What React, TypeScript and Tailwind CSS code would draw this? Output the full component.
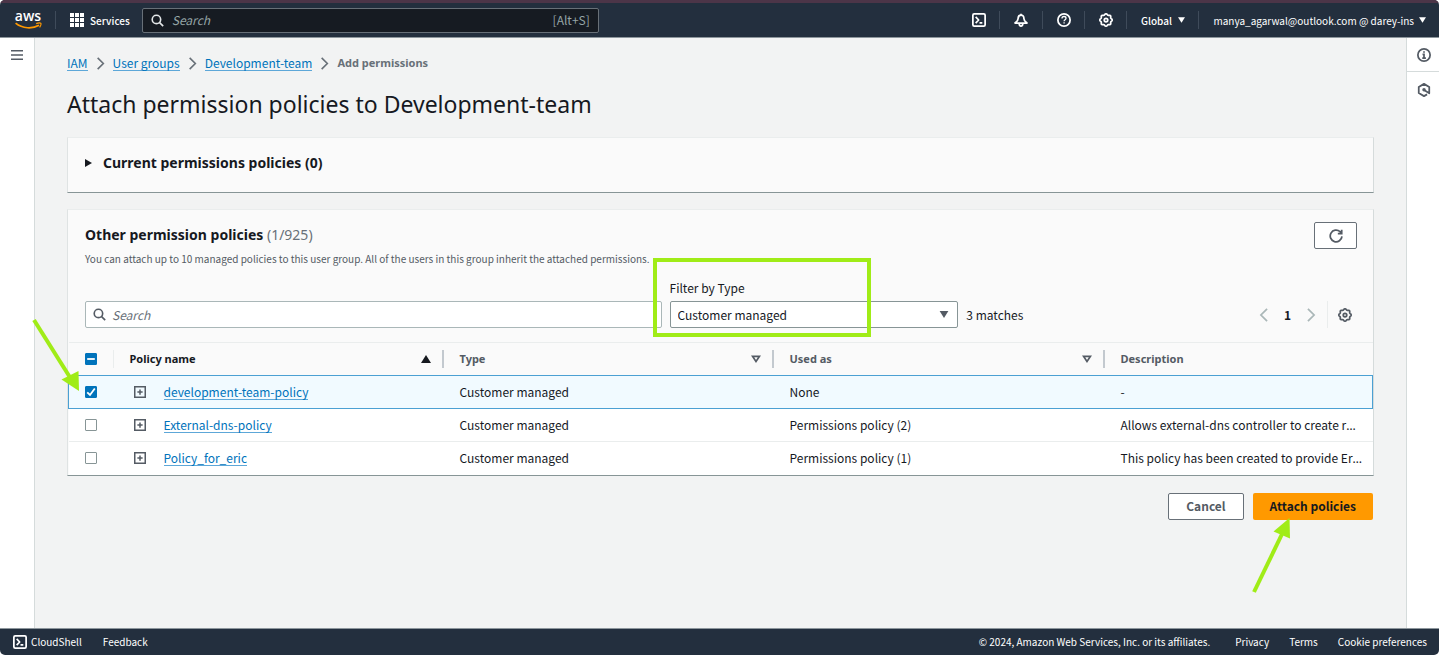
import React, { useEffect, useRef, useState } from "react";

type IconProps = { className?: string };

const gearPath = (() => {
  const points: string[] = [];
  for (let i = 0; i < 96; i++) {
    const a = (i / 96) * Math.PI * 2;
    const r = 6.5 + 0.6 * Math.cos(8 * a);
    points.push(`${(8 + r * Math.cos(a)).toFixed(2)} ${(8 + r * Math.sin(a)).toFixed(2)}`);
  }
  return `M${points.join("L")}Z`;
})();

function Icon({ className, children }: IconProps & { children: React.ReactNode }) {
  return (
    <svg
      viewBox="0 0 16 16"
      fill="none"
      stroke="currentColor"
      strokeWidth="2"
      strokeLinejoin="round"
      aria-hidden="true"
      className={`shrink-0 ${className ?? "size-[14px]"}`}
    >
      {children}
    </svg>
  );
}

const GearIcon = ({ className }: IconProps) => (
  <Icon className={className}>
    <path d={gearPath} />
    <circle cx="8" cy="8" r="2" />
  </Icon>
);

const ShellIcon = ({ className }: IconProps) => (
  <Icon className={className}>
    <rect x="1" y="1" width="14" height="14" rx="1.5" />
    <path d="M4.2 4.5 7.6 8l-3.4 3.5M8.6 11.4h3.2" />
  </Icon>
);

const SearchIcon = ({ className }: IconProps) => (
  <Icon className={className}>
    <circle cx="6.7" cy="6.7" r="5.2" />
    <path d="m10.6 10.6 4.4 4.4" />
  </Icon>
);

const ChevronIcon = ({ className, left }: IconProps & { left?: boolean }) => (
  <Icon className={className}>
    <path strokeLinejoin="miter" d={left ? "M11.5 1 4.5 8l7 7" : "M4.5 1l7 7-7 7"} />
  </Icon>
);

const CaretDown = ({ className }: IconProps) => (
  <svg viewBox="0 0 10 8" fill="currentColor" aria-hidden="true" className={`shrink-0 ${className ?? ""}`}>
    <path d="M0 0h10L5 8z" />
  </svg>
);

function AwsLogo() {
  return (
    <a href="#home" aria-label="AWS home" className="flex w-[26px] flex-col items-center">
      <span className="h-[11px] font-['Open_Sans','Noto_Sans',sans-serif] text-[14px] leading-[9px] font-semibold text-white">
        aws
      </span>
      <svg viewBox="0 0 27 7" fill="none" stroke="#f90" className="h-[7px] w-[27px]" aria-hidden="true">
        <path d="M.6 1.2C7.500 6.800 17.500 7 24 3.200" strokeWidth="1.700" />
        <path d="M21.200 1.600c2-.7 4-.8 4.600-.3.500.7-.1 2.500-1.200 4.100" strokeWidth="1.200" />
      </svg>
    </a>
  );
}

function Header() {
  const cell = "flex h-[18px] items-center justify-center border-l border-[#3f4b5a]";
  return (
    <header className="flex h-[38px] items-center border-t-[3px] border-b border-t-[#4c3548] border-b-[#8d969c] bg-[#232f3e] pr-[13px] pl-[15px] text-[10px] text-white">
      <AwsLogo />
      <span className="ml-3.5 h-[18px] w-px bg-[#3f4b5a]" />
      <button type="button" className="ml-3.5 flex items-center gap-1.5 font-medium">
        <svg viewBox="0 0 14 14" fill="currentColor" className="size-[14px]" aria-hidden="true">
          {[0, 5, 10].map((y) =>
            [0, 5, 10].map((x) => <rect key={`${x}-${y}`} x={x} y={y} width="4" height="4" />),
          )}
        </svg>
        Services
      </button>
      <div className="ml-3 flex h-[25px] w-[457px] items-center rounded-xs border border-[#687078] bg-[#161b22] px-2">
        <SearchIcon className="size-[13px] text-[#e3e6e8]" />
        <input
          type="search"
          aria-label="Search services"
          placeholder="Search"
          className="ml-2 min-w-0 flex-1 bg-transparent text-[12px] italic outline-none placeholder:text-[#95a5a6]"
        />
        <span className="text-[12px] text-[#95a5a6]">[Alt+S]</span>
      </div>
      <div className="ml-auto flex items-center">
        <button type="button" aria-label="CloudShell" className="flex w-10 items-center justify-center">
          <ShellIcon />
        </button>
        <button type="button" aria-label="Notifications" className={`${cell} w-[43px]`}>
          <Icon>
            <path d="M8 .8v1.500M8 2.300C5.800 2.300 4.700 4 4.700 6.200c0 2.200-.9 3.300-3.500 5.300h13.600c-2.600-2-3.500-3.100-3.500-5.300C11.300 4 10.200 2.300 8 2.300zM6 12.300c0 1.700.9 2.600 2 2.600s2-.9 2-2.600" />
          </Icon>
        </button>
        <button type="button" aria-label="Help" className={`${cell} w-[42px]`}>
          <Icon>
            <circle cx="8" cy="8" r="7" />
            <path strokeWidth="1.500" d="M5.700 6.300C5.700 4.800 6.700 4 8 4s2.300.8 2.300 2c0 1.500-2.200 1.700-2.200 3.300M8.100 10.600v1.500" />
          </Icon>
        </button>
        <button type="button" aria-label="Settings" className={`${cell} w-[42px]`}>
          <GearIcon />
        </button>
        <button type="button" className={`${cell} w-[72px] gap-1.5 font-medium`}>
          Global <CaretDown className="h-1.5 w-[7px]" />
        </button>
        <button type="button" className={`${cell} gap-[5px] pl-3.5`}>
          manya_agarwal@outlook.com @ darey-ins <CaretDown className="h-1.5 w-[7px]" />
        </button>
      </div>
    </header>
  );
}

function Breadcrumbs() {
  return (
    <nav aria-label="Breadcrumbs">
      <ol className="flex items-center gap-1.5 text-[12px] leading-4">
        {["IAM", "User groups", "Development-team"].map((name) => (
          <li key={name} className="flex items-center gap-1.5">
            <a href="#crumb" className="border-b border-[#5da7d8] leading-[14px] text-[#0073bb]">
              {name}
            </a>
            <ChevronIcon className="size-[13px] text-[#687078]" />
          </li>
        ))}
        <li className="font-['Noto_Sans',sans-serif] text-[11px] font-bold text-[#687078]">Add permissions</li>
      </ol>
    </nav>
  );
}

function Tick({
  label,
  checked,
  mixed,
  onChange,
}: {
  label: string;
  checked: boolean;
  mixed?: boolean;
  onChange: () => void;
}) {
  const ref = useRef<HTMLInputElement>(null);
  useEffect(() => {
    if (ref.current) ref.current.indeterminate = !!mixed;
  }, [mixed]);
  return (
    <span className="relative flex size-3">
      <input
        ref={ref}
        type="checkbox"
        aria-label={label}
        checked={checked}
        onChange={onChange}
        className="size-3 appearance-none rounded-[1px] border border-[#879596] bg-white checked:border-[#0073bb] checked:bg-[#0073bb] indeterminate:border-[#0073bb] indeterminate:bg-[#0073bb]"
      />
      {(mixed || checked) && (
        <svg
          viewBox="0 0 12 12"
          fill="none"
          stroke="#fff"
          strokeWidth="1.800"
          className="pointer-events-none absolute inset-0"
          aria-hidden="true"
        >
          <path d={mixed ? "M2.200 6h7.600" : "M2.200 6.300 5 9l4.800-6.500"} />
        </svg>
      )}
    </span>
  );
}

const rows = [
  { name: "development-team-policy", used: "None", text: "-", cut: false },
  {
    name: "External-dns-policy",
    used: "Permissions policy (2)",
    text: "Allows external-dns controller to create r",
    cut: true,
  },
  {
    name: "Policy_for_eric",
    used: "Permissions policy (1)",
    text: "This policy has been created to provide Er",
    cut: true,
  },
];

function HeadCell({ title, sort }: { title: string; sort?: "asc" | "none" }) {
  return (
    <th scope="col" className="p-0 text-left font-bold">
      <div
        className={`flex h-[18px] items-center justify-between pl-4 ${
          sort === "asc" ? "text-[#16191f]" : "text-[#545b64]"
        } ${sort ? "border-r-2 border-[#c3c9cf] pr-[11px]" : ""}`}
      >
        {title}
        {sort && (
          <svg viewBox="0 0 10 8" className="h-2 w-[10px]" aria-hidden="true">
            {sort === "asc" ? (
              <path d="M0 8h10L5 0z" fill="currentColor" />
            ) : (
              <path d="M1.500 1.300h7L5 6.500z" fill="none" stroke="currentColor" strokeWidth="1.700" />
            )}
          </svg>
        )}
      </div>
    </th>
  );
}

function PolicyTable() {
  const [selected, setSelected] = useState<string[]>([rows[0].name]);
  const toggle = (name: string) =>
    setSelected((s) => (s.includes(name) ? s.filter((n) => n !== name) : [...s, name]));
  const all = selected.length === rows.length;
  return (
    <table className="w-full table-fixed border-collapse text-[12px] leading-4">
      <colgroup>
        <col className="w-[45px]" />
        <col className="w-[330px]" />
        <col className="w-[330px]" />
        <col className="w-[331px]" />
        <col />
      </colgroup>
      <thead className="font-['Noto_Sans',sans-serif] text-[11px]">
        <tr className="h-[33px] border-t border-[#eaeded] bg-[#fafafa]">
          <th scope="col" className="p-0">
            <div className="flex h-[18px] items-center border-r border-[#eaeded] pl-4">
              <Tick
                label="Select all policies"
                checked={all}
                mixed={selected.length > 0 && !all}
                onChange={() => setSelected(all ? [] : rows.map((r) => r.name))}
              />
            </div>
          </th>
          <HeadCell title="Policy name" sort="asc" />
          <HeadCell title="Type" sort="none" />
          <HeadCell title="Used as" sort="none" />
          <HeadCell title="Description" />
        </tr>
      </thead>
      <tbody>
        {rows.map((row, i) => {
          const on = selected.includes(row.name);
          return (
            <tr
              key={row.name}
              className={
                on
                  ? "h-[33px] border border-[#4ba0d3] bg-[#f1faff]"
                  : "h-[33px] border-t border-[#eaeded] bg-white"
              }
            >
              <td className="relative p-0 pl-4">
                <Tick label={`Select ${row.name}`} checked={on} onChange={() => toggle(row.name)} />
                {i === 0 && (
                  <svg
                    viewBox="0 0 48 74"
                    className="pointer-events-none absolute right-[34px] bottom-4 h-[74px] w-12"
                    aria-hidden="true"
                  >
                    <path d="M2 2 39 61" stroke="#a0ec17" strokeWidth="4" />
                    <path d="M47 73 29.500 61.500 46.500 53z" fill="#a0ec17" />
                  </svg>
                )}
              </td>
              <td className="p-0 pl-5">
                <div className="flex items-center gap-[18px]">
                  <button type="button" aria-label={`Expand ${row.name}`} className="text-[#545b64]">
                    <Icon className="size-3">
                      <path strokeLinejoin="miter" d="M1 1h14v14H1zM8 4.500v7M4.500 8h7" />
                    </Icon>
                  </button>
                  <a href="#policy" className="border-b border-[#5da7d8] leading-[14px] text-[#0073bb]">
                    {row.name}
                  </a>
                </div>
              </td>
              <td className="p-0 pl-4">Customer managed</td>
              <td className="p-0 pl-4">{row.used}</td>
              <td className="overflow-hidden p-0 pl-4 whitespace-nowrap">
                {row.text}
                {row.cut && <span className="font-['Noto_Sans',sans-serif]">…</span>}
              </td>
            </tr>
          );
        })}
      </tbody>
    </table>
  );
}

const card =
  "border border-t-[#eaeded] border-r-[#d5dbdb] border-b-[#879596] border-l-[#dfe3e3] bg-[#fafafa]";

function OtherPolicies() {
  return (
    <section className={`mt-4 ${card}`}>
      <div className="pt-3 pr-4 pb-3.5 pl-[17px]">
        <div className="flex items-start justify-between">
          <div>
            <h2 className="mt-[3px] font-['Noto_Sans',sans-serif] text-[14px] leading-5 font-bold">
              Other permission policies <span className="font-normal text-[#687078]">(1/925)</span>
            </h2>
            <p className="mt-1.5 text-[10px] leading-4 text-[#545b64]">
              You can attach up to 10 managed policies to this user group. All of the users in this group inherit the
              attached permissions.
            </p>
          </div>
          <button
            type="button"
            aria-label="Refresh"
            className="flex h-[27px] w-[43px] shrink-0 items-center justify-center rounded-xs border border-[#687078] bg-white text-[#545b64]"
          >
            <Icon>
              <path strokeLinejoin="miter" d="M14.800 8.500A6.700 6.700 0 1 1 12.600 3l1.700 1.700M14.500.8v4.400h-4.400" />
            </Icon>
          </button>
        </div>
        <div className="mt-[13px] grid grid-cols-[577fr_289fr_391fr] items-end gap-2 text-[12px]">
          <div className="flex h-[27px] items-center rounded-xs border border-[#aab7b8] bg-white px-[7px]">
            <SearchIcon className="size-[13px] text-[#545b64]" />
            <input
              type="search"
              aria-label="Search policies"
              placeholder="Search"
              className="ml-1.5 min-w-0 flex-1 bg-transparent italic outline-none placeholder:text-[#687078]"
            />
          </div>
          <div className="relative flex flex-col">
            <label htmlFor="type" className="mb-[5px] leading-4">
              Filter by Type
            </label>
            <select
              id="type"
              defaultValue="Customer managed"
              className="h-[27px] w-full appearance-none rounded-xs border border-[#879596] bg-white px-[7px]"
            >
              <option>Customer managed</option>
              <option>All types</option>
            </select>
            <CaretDown className="pointer-events-none absolute right-[9px] bottom-[10px] h-[7px] w-[10px] text-[#545b64]" />
            <span
              aria-hidden="true"
              className="pointer-events-none absolute -bottom-[9px] -left-[17px] h-[79px] w-[218px] border-4 border-[#a0ec17]"
            />
          </div>
          <div className="flex h-[27px] items-center justify-between">
            <span>3 matches</span>
            <div className="flex items-center">
              <button type="button" aria-label="Previous page" className="text-[#aab7b8]">
                <ChevronIcon left className="size-[14px]" />
              </button>
              <span className="w-[33px] text-center font-bold">1</span>
              <button type="button" aria-label="Next page" className="text-[#aab7b8]">
                <ChevronIcon className="size-[14px]" />
              </button>
              <span className="mr-[10px] ml-[9px] h-[27px] w-px bg-[#eaeded]" />
              <button type="button" aria-label="Preferences" className="mr-[5px] text-[#545b64]">
                <GearIcon />
              </button>
            </div>
          </div>
        </div>
      </div>
      <PolicyTable />
    </section>
  );
}

export default function App() {
  return (
    <div className="flex min-h-screen flex-col overflow-hidden rounded-[5px] bg-white font-['Noto_Sans_CJK_SC','Noto_Sans',sans-serif] text-[#16191f]">
      <Header />
      <div className="flex flex-1">
        <aside className="w-[35px] shrink-0 border-r border-[#d5dbdb] bg-white pt-[11px] pl-[11px]">
          <button type="button" aria-label="Open navigation" className="block text-[#545b64]">
            <svg viewBox="0 0 12 12" className="size-3" fill="currentColor" aria-hidden="true">
              <path d="M0 1h12v1.500H0zM0 5.200h12v1.500H0zM0 9.500h12V11H0z" />
            </svg>
          </button>
        </aside>
        <main className="min-w-0 flex-1 bg-[#f2f3f3] px-8 pt-[17px]">
          <Breadcrumbs />
          <h1 className="mt-[17px] mb-[17px] font-['Noto_Sans',sans-serif] text-[23px] leading-8">
            Attach permission policies to Development-team
          </h1>
          <section className={`px-[17px] pt-[15px] pb-[19px] ${card}`}>
            <button
              type="button"
              className="flex items-center gap-[11px] font-['Noto_Sans',sans-serif] text-[14px] leading-5 font-bold"
            >
              <svg viewBox="0 0 7 8" className="h-2 w-[7px]" fill="currentColor" aria-hidden="true">
                <path d="M0 0v8l7-4z" />
              </svg>
              Current permissions policies (0)
            </button>
          </section>
          <OtherPolicies />
          <div className="mt-[17px] flex justify-end gap-[9px] pr-px text-[12px] font-bold">
            <button
              type="button"
              className="h-[27px] rounded-xs border border-[#687078] bg-white px-[17px] text-[#545b64]"
            >
              Cancel
            </button>
            <div className="relative">
              <button type="button" className="h-[27px] rounded-xs bg-[#f90] px-[17px] text-[#16191f]">
                Attach policies
              </button>
              <svg
                viewBox="0 0 40 76"
                className="pointer-events-none absolute top-[25px] -left-px h-[76px] w-10"
                aria-hidden="true"
              >
                <path d="M2 74 31 14" stroke="#a0ec17" strokeWidth="4" />
                <path d="M37.500 0 21.500 13.500 38 20.500z" fill="#a0ec17" />
              </svg>
            </div>
          </div>
        </main>
        <aside className="flex w-[33px] shrink-0 flex-col border-l border-[#d5dbdb] bg-white text-[#545b64]">
          <button
            type="button"
            aria-label="Info"
            className="flex h-[34px] items-center justify-center border-b border-[#d5dbdb] pl-px"
          >
            <Icon>
              <circle cx="8" cy="8" r="7" />
              <path d="M8 3.700v1.800M6.300 7.400H8v4M6 11.500h4.200" strokeLinejoin="miter" />
            </Icon>
          </button>
          <button type="button" aria-label="Diagnostics" className="flex h-[35px] items-center justify-center pl-px">
            <Icon>
              <path d="M11.500 13 8 15l-6-3.500v-7L8 1l6 3.500v7.300L8.500 8.300" />
              <circle cx="8" cy="7.800" r="1" fill="currentColor" />
            </Icon>
          </button>
        </aside>
      </div>
      <footer className="flex h-[27px] items-center border-t border-[#8d969c] bg-[#232f3e] pr-3 pb-px pl-[13px] text-[10px] text-white">
        <button type="button" className="flex items-center gap-1">
          <ShellIcon />
          CloudShell
        </button>
        <a href="#feedback" className="ml-[21px]">
          Feedback
        </a>
        <span className="ml-auto">© 2024, Amazon Web Services, Inc. or its affiliates.</span>
        <a href="#privacy" className="ml-[25px]">
          Privacy
        </a>
        <a href="#terms" className="ml-5">
          Terms
        </a>
        <a href="#cookies" className="ml-5">
          Cookie preferences
        </a>
      </footer>
    </div>
  );
}
